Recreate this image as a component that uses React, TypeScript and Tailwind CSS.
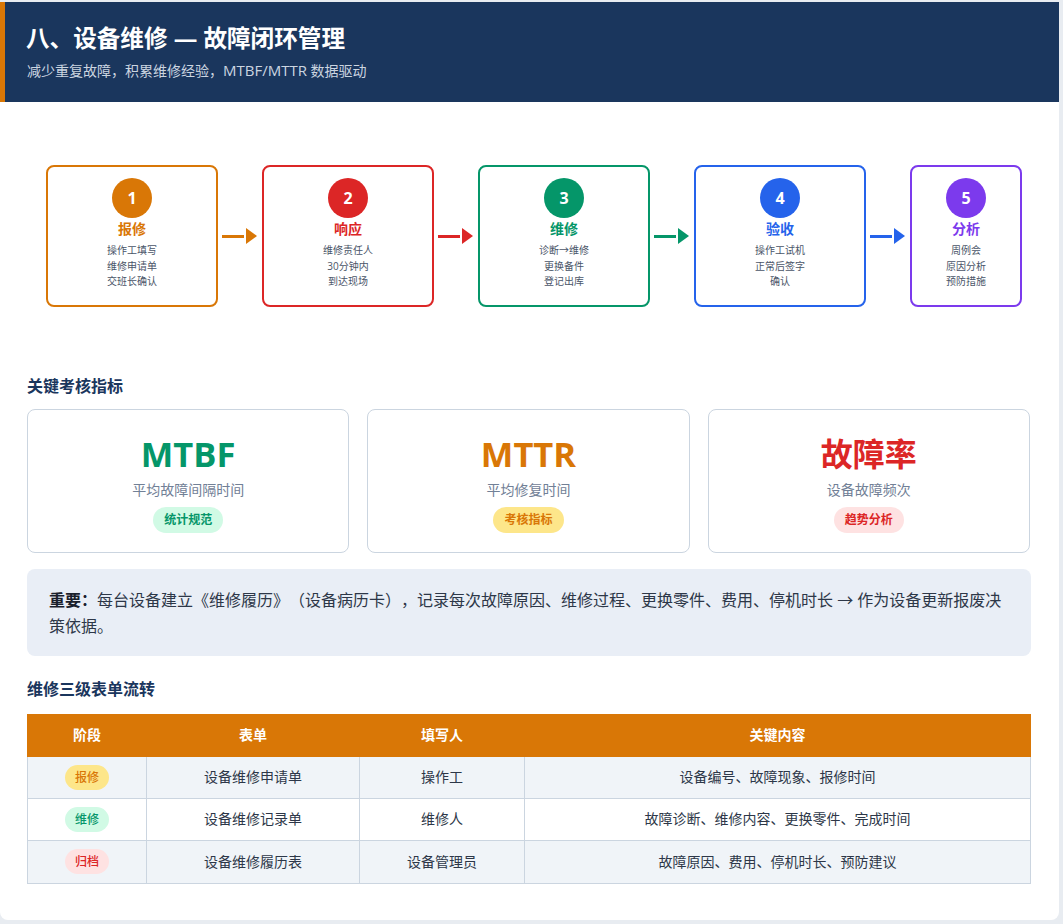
import React from 'react';

const steps = [
  { n: '1', title: '报修', lines: ['操作工填写', '维修申请单', '交班长确认'], box: 'border-[#d97706]', bg: 'bg-[#d97706]', text: 'text-[#d97706]', tri: 'border-l-[#d97706]', w: 'w-[172px]' },
  { n: '2', title: '响应', lines: ['维修责任人', '30分钟内', '到达现场'], box: 'border-[#dc2626]', bg: 'bg-[#dc2626]', text: 'text-[#dc2626]', tri: 'border-l-[#dc2626]', w: 'w-[172px]' },
  { n: '3', title: '维修', lines: ['诊断→维修', '更换备件', '登记出库'], box: 'border-[#059669]', bg: 'bg-[#059669]', text: 'text-[#059669]', tri: 'border-l-[#059669]', w: 'w-[172px]' },
  { n: '4', title: '验收', lines: ['操作工试机', '正常后签字', '确认'], box: 'border-[#2563eb]', bg: 'bg-[#2563eb]', text: 'text-[#2563eb]', tri: 'border-l-[#2563eb]', w: 'w-[172px]' },
  { n: '5', title: '分析', lines: ['周例会', '原因分析', '预防措施'], box: 'border-[#7c3aed]', bg: 'bg-[#7c3aed]', text: 'text-[#7c3aed]', tri: 'border-l-[#7c3aed]', w: 'w-[112px]' },
];

const kpis = [
  { big: 'MTBF', size: 'text-[34.5px]', sub: '平均故障间隔时间', tag: '统计规范', color: 'text-[#059669]', pill: 'bg-[#d1fae5] text-[#059669]' },
  { big: 'MTTR', size: 'text-[34.5px]', sub: '平均修复时间', tag: '考核指标', color: 'text-[#d97706]', pill: 'bg-[#fde68a] text-[#d97706]' },
  { big: '故障率', size: 'text-[32px]', sub: '设备故障频次', tag: '趋势分析', color: 'text-[#dc2626]', pill: 'bg-[#fee2e2] text-[#dc2626]' },
];

const rows = [
  { stage: '报修', pill: 'bg-[#fde68a] text-[#d97706]', form: '设备维修申请单', who: '操作工', content: '设备编号、故障现象、报修时间', bg: 'bg-[#f0f4f8]', h: 'h-[42px]' },
  { stage: '维修', pill: 'bg-[#d1fae5] text-[#059669]', form: '设备维修记录单', who: '维修人', content: '故障诊断、维修内容、更换零件、完成时间', bg: 'bg-white', h: 'h-[42px]' },
  { stage: '归档', pill: 'bg-[#fee2e2] text-[#dc2626]', form: '设备维修履历表', who: '设备管理员', content: '故障原因、费用、停机时长、预防建议', bg: 'bg-[#f0f4f8]', h: 'h-[43px]' },
];

const App: React.FC = () => {
  return (
    <div className="h-[924px] bg-[#e8ecf1] pt-[2px] overflow-hidden font-['Open_Sans','Noto_Sans_CJK_SC',sans-serif] [text-spacing-trim:space-all]">
      <div className="w-[1059px] h-[918px] bg-white rounded-br-lg rounded-bl-lg overflow-hidden">
        {/* Header */}
        <div className="h-[100px] bg-[#1a365d] border-l-[5px] border-[#d97706] pl-[21px] pt-[19px]">
          <h1 className="text-[23.6px] leading-[34px] font-bold text-white">八、设备维修 — 故障闭环管理</h1>
          <p className="mt-[5px] pl-[1px] text-[14px] leading-[20px] text-[#cbd5e0]">
            减少重复故障，积累维修经验，<span className="text-[15px]">MTBF/MTTR</span> 数据驱动
          </p>
        </div>

        <div className="px-[27px]">
          {/* Flow */}
          <div className="flex items-center pl-[19px] pt-[63px]">
            {steps.map((s, i) => (
              <React.Fragment key={s.n}>
                <div className={`${s.w} h-[142px] shrink-0 border-2 ${s.box} rounded-lg bg-white flex flex-col items-center pt-[11px]`}>
                  <div className={`w-10 h-10 rounded-full ${s.bg} text-white text-[16px] font-bold flex items-center justify-center`}>{s.n}</div>
                  <div className={`text-[14px] leading-[22px] font-bold ${s.text}`}>{s.title}</div>
                  <div className="mt-[3px] text-[10px] leading-[15.5px] text-[#4a5568] text-center">
                    {s.lines.map((l) => (
                      <div key={l}>{l}</div>
                    ))}
                  </div>
                </div>
                {i < steps.length - 1 && (
                  <div className="w-[44px] shrink-0 flex items-center pl-[4px]">
                    <div className={`w-[22px] h-[3px] ${s.bg}`}></div>
                    <div className={`ml-[2px] w-0 h-0 border-y-[8px] border-y-transparent border-l-[11px] ${s.tri}`}></div>
                  </div>
                )}
              </React.Fragment>
            ))}
          </div>

          {/* KPI cards */}
          <h2 className="mt-[68px] text-[16px] leading-[22px] font-bold text-[#1a365d]">关键考核指标</h2>
          <div className="mt-[12px] grid grid-cols-3 gap-[18px] w-[1003px]">
            {kpis.map((k) => (
              <div key={k.big} className="h-[144px] border border-[#cbd5e0] rounded-lg flex flex-col items-center pt-[19px]">
                <div className={`${k.size} leading-[50px] font-bold ${k.color}`}>{k.big}</div>
                <div className="mt-[1px] text-[14px] leading-[20px] text-[#718096]">{k.sub}</div>
                <span className={`mt-[7px] h-[26px] px-[11px] rounded-full text-[12px] leading-[26px] font-bold ${k.pill}`}>{k.tag}</span>
              </div>
            ))}
          </div>

          {/* Note */}
          <div className="mt-[16px] w-[1004px] h-[87px] bg-[#e9eef6] rounded-lg px-[22px] py-[18px] text-[16px] leading-[26px] text-[#2d3748]">
            <strong className="font-bold text-[#1a202c]">重要：</strong>每台设备建立《维修履历》（设备病历卡），记录每次故障原因、维修过程、更换零件、费用、停机时长 → 作为设备更新报废决策依据。
          </div>

          {/* Table */}
          <h2 className="mt-[22px] text-[16px] leading-[22px] font-bold text-[#1a365d]">维修三级表单流转</h2>
          <table className="mt-[14px] w-[1004px] table-fixed border-collapse text-[14px] text-[#2d3748]">
            <colgroup>
              <col className="w-[119px]" />
              <col className="w-[213px]" />
              <col className="w-[165px]" />
              <col />
            </colgroup>
            <thead>
              <tr className="h-[42px] bg-[#d97706] text-white">
                <th className="font-bold pb-[2px] border border-[#d97706]">阶段</th>
                <th className="font-bold pb-[2px] border border-[#d97706]">表单</th>
                <th className="font-bold pb-[2px] border border-[#d97706]">填写人</th>
                <th className="font-bold pb-[2px] border border-[#d97706]">关键内容</th>
              </tr>
            </thead>
            <tbody>
              {rows.map((r) => (
                <tr key={r.stage} className={`${r.h} ${r.bg}`}>
                  <td className="border border-[#cbd5e0] text-center pb-[1px]">
                    <span className={`inline-block h-[25px] px-[10px] rounded-full text-[12px] leading-[25px] font-medium align-middle ${r.pill}`}>{r.stage}</span>
                  </td>
                  <td className="border border-[#cbd5e0] text-center pb-[2px]">{r.form}</td>
                  <td className="border border-[#cbd5e0] text-center pb-[2px]">{r.who}</td>
                  <td className="border border-[#cbd5e0] text-center pb-[2px]">{r.content}</td>
                </tr>
              ))}
            </tbody>
          </table>
        </div>
      </div>
    </div>
  );
};

export default App;
